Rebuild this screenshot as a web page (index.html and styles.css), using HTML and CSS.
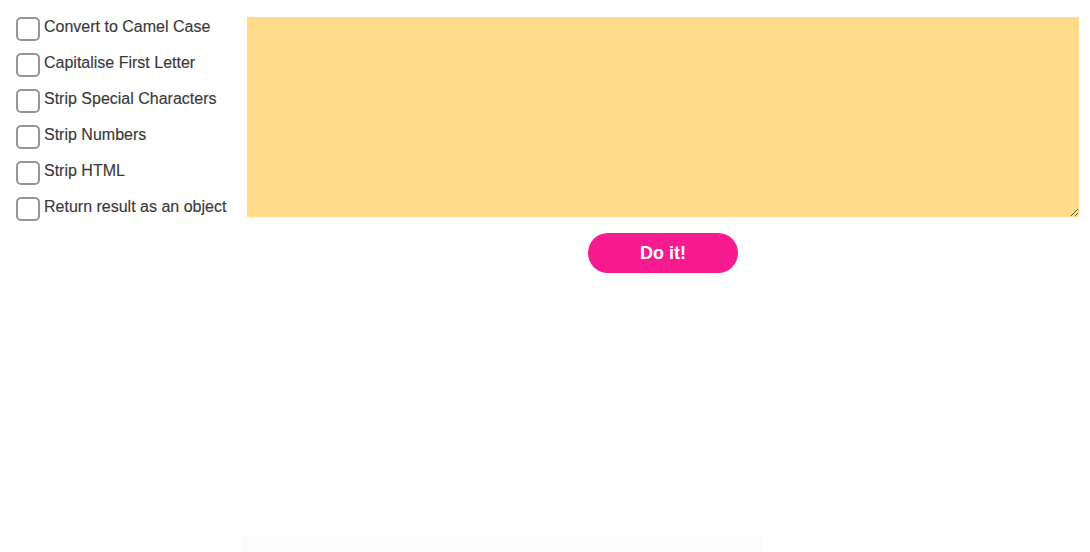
FILE: index.html
```html
<!DOCTYPE html>
<html>
<head>
<meta charset="utf-8">
<link rel="stylesheet" href="styles.css">
</head>
<body>
<div class="app">
  <div class="options">
    <label class="opt"><span class="box"></span><span class="txt">Convert to Camel Case</span></label>
    <label class="opt"><span class="box"></span><span class="txt">Capitalise First Letter</span></label>
    <label class="opt"><span class="box"></span><span class="txt">Strip Special Characters</span></label>
    <label class="opt"><span class="box"></span><span class="txt">Strip Numbers</span></label>
    <label class="opt"><span class="box"></span><span class="txt">Strip HTML</span></label>
    <label class="opt"><span class="box"></span><span class="txt">Return result as an object</span></label>
  </div>
  <div class="main">
    <textarea class="input"></textarea>
    <div class="actions"><button class="go">Do it!</button></div>
    <div class="output"></div>
  </div>
</div>
</body>
</html>
```
FILE: styles.css
```css
html, body { margin: 0; padding: 0; background: #fff; }
body { font-family: "Liberation Sans", Arial, Helvetica, sans-serif; overflow: hidden; height: 552px; }
.app { display: flex; padding: 17px 11px 0 16px; }
.options { width: 231px; flex: none; display: flex; flex-direction: column; gap: 13px; }
.opt { display: flex; align-items: flex-start; gap: 4px; height: 23px; }
.box { width: 20px; height: 20px; border: 2px solid #959595; border-radius: 5px; flex: none; background: #fff; }
.txt { font-size: 16px; color: #3a3a3a; line-height: 18px; margin-top: 1px; -webkit-text-stroke: 0.15px #3a3a3a; }
.main { flex: 1; display: flex; flex-direction: column; }
.input { display: block; width: 100%; height: 200px; box-sizing: border-box; border: none; background: #ffdb8a; margin: 0; resize: vertical; }
.actions { display: flex; justify-content: center; padding-top: 16px; }
.go { width: 150px; height: 40px; border: none; border-radius: 20px; background: #f71b8f; color: #fff; font-family: "Liberation Sans", Arial, sans-serif; font-weight: bold; font-size: 18px; }
.output { margin-top: 263px; margin-left: -4px; width: 520px; height: 20px; background: #fcfcfc; }
```
